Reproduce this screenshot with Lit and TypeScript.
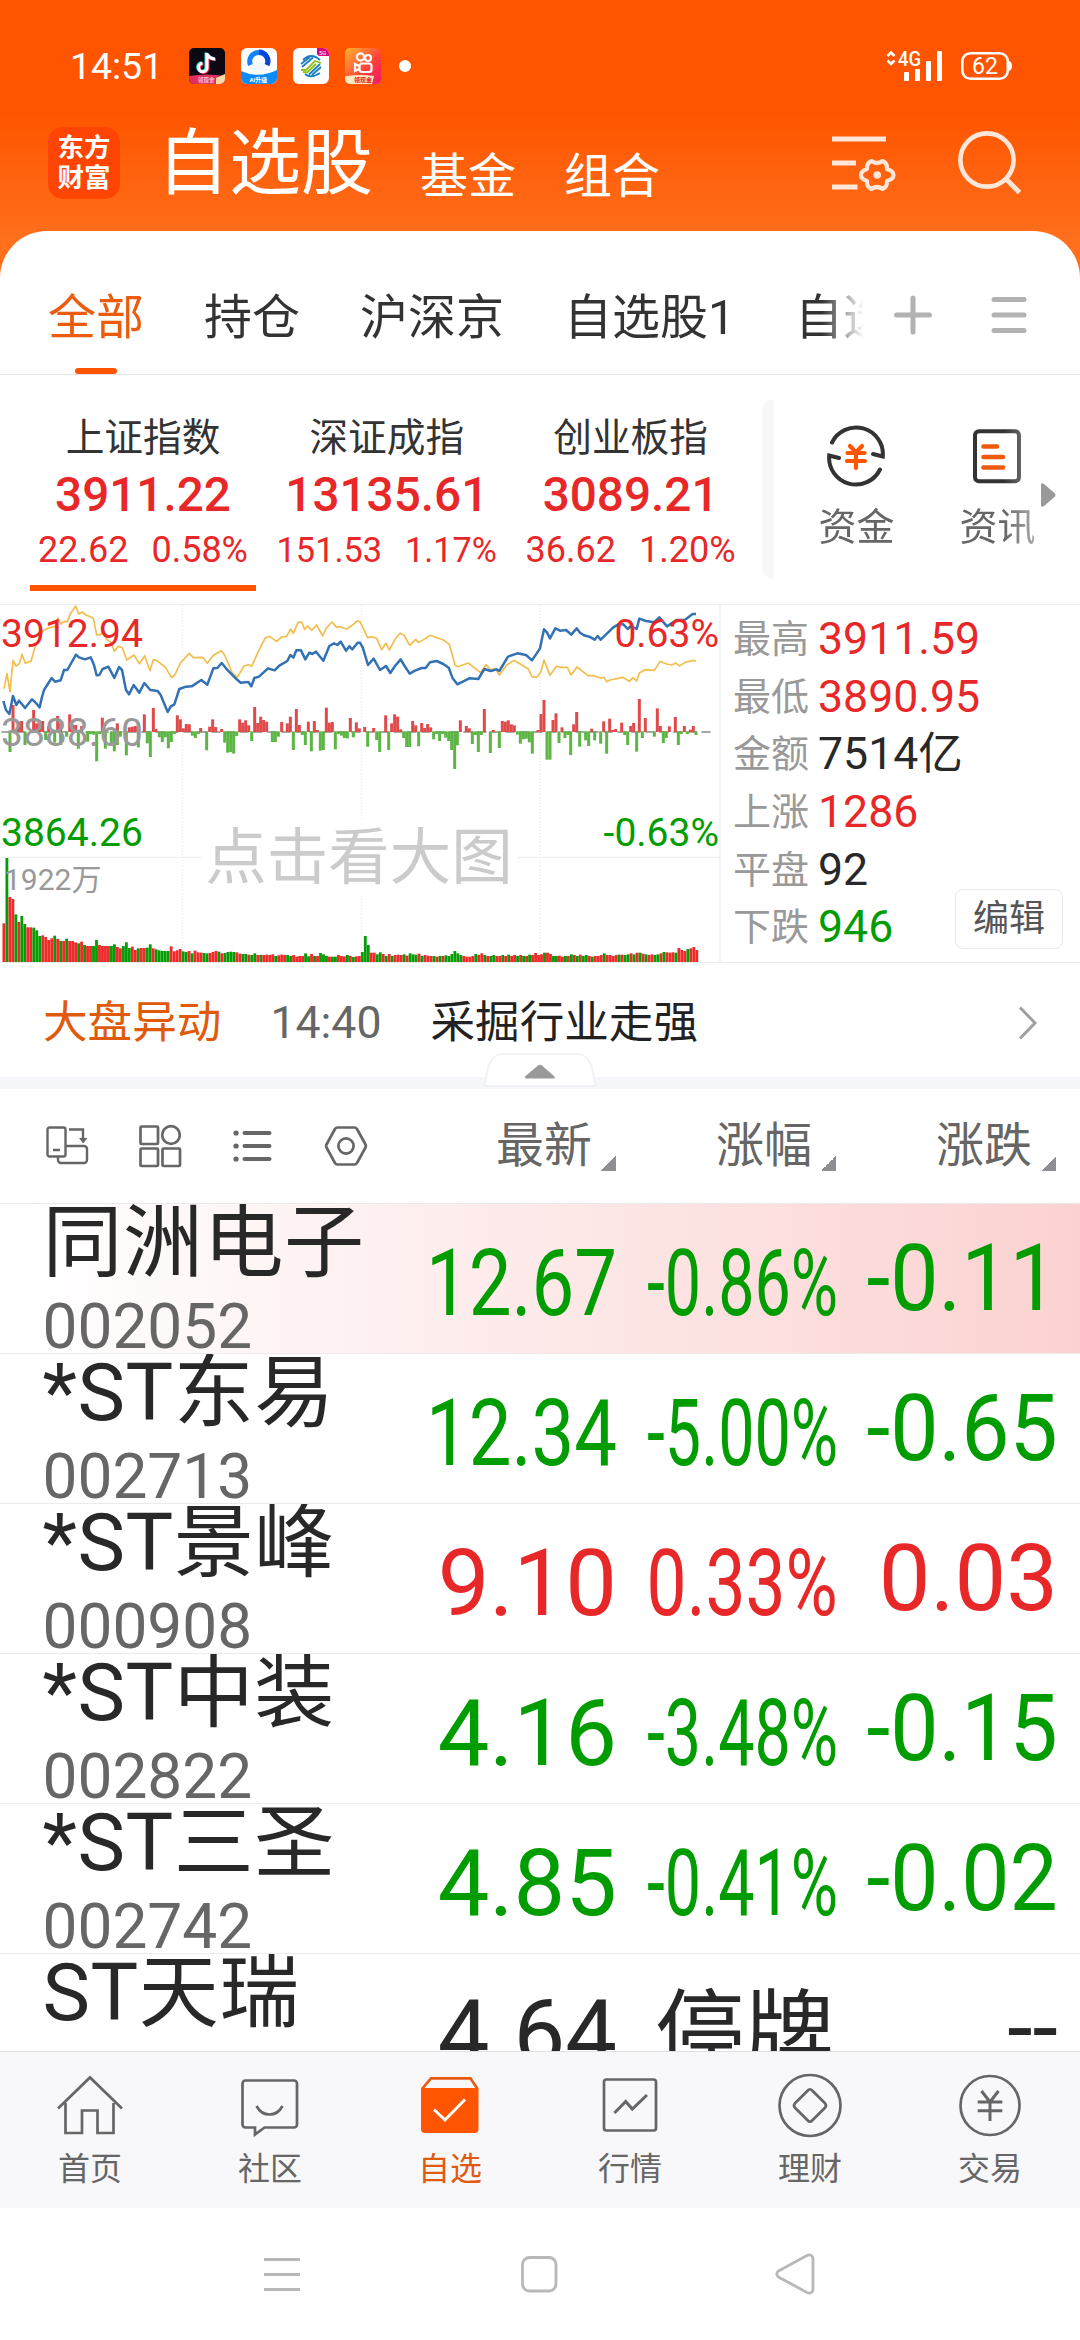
import { LitElement, html, svg, css } from "lit";
import { customElement } from "lit/decorators.js";
import { classMap } from "lit/directives/class-map.js";
import { styleMap } from "lit/directives/style-map.js";

type Tone = "up" | "down" | "flat";

const INDEXES = [
  { name: "上证指数", value: "3911.22", diff: "22.62", pct: "0.58%" },
  { name: "深证成指", value: "13135.61", diff: "151.53", pct: "1.17%" },
  { name: "创业板指", value: "3089.21", diff: "36.62", pct: "1.20%" },
];

const STATS: { label: string; value: string; tone: Tone }[] = [
  { label: "最高", value: "3911.59", tone: "up" },
  { label: "最低", value: "3890.95", tone: "up" },
  { label: "金额", value: "7514亿", tone: "flat" },
  { label: "上涨", value: "1286", tone: "up" },
  { label: "平盘", value: "92", tone: "flat" },
  { label: "下跌", value: "946", tone: "down" },
];

const STOCKS: { name: string; code: string; last: string; pct: string; diff: string; tone: Tone; flash?: boolean }[] = [
  { name: "同洲电子", code: "002052", last: "12.67", pct: "-0.86%", diff: "-0.11", tone: "down", flash: true },
  { name: "*ST东易", code: "002713", last: "12.34", pct: "-5.00%", diff: "-0.65", tone: "down" },
  { name: "*ST景峰", code: "000908", last: "9.10", pct: "0.33%", diff: "0.03", tone: "up" },
  { name: "*ST中装", code: "002822", last: "4.16", pct: "-3.48%", diff: "-0.15", tone: "down" },
  { name: "*ST三圣", code: "002742", last: "4.85", pct: "-0.41%", diff: "-0.02", tone: "down" },
  { name: "ST天瑞", code: "", last: "4.64", pct: "停牌", diff: "--", tone: "flat" },
];

/* Series are kept in thirds of a pixel; the chart's viewBox scales them. */
const STEP = 8.96;
const PRICE =
  "10,333 18,360 28,372 39,318 49,345 57,332 66,343 75,354 96,328 105,336 119,352 125,325 132,300 155,264 165,275 182,271 192,240 202,240 228,194 237,202 255,208 272,202 282,225 290,256 298,255 308,237 325,230 343,264 357,231 366,240 378,300 387,313 401,285 418,308 433,279 451,300 473,303 482,315 503,366 512,350 523,343 538,297 558,290 575,289 604,270 622,284 640,235 652,234 665,219 678,235 690,248 710,268 722,278 745,276 754,289 763,264 777,260 804,235 824,241 838,227 862,213 871,195 880,203 889,181 903,181 916,208 928,188 937,192 948,185 970,212 988,168 1002,160 1012,165 1022,155 1038,182 1048,169 1057,178 1073,158 1080,158 1088,172 1104,225 1121,206 1140,240 1158,228 1171,249 1185,228 1202,208 1212,225 1229,251 1245,242 1265,234 1277,234 1290,217 1310,213 1330,222 1346,233 1358,265 1372,283 1408,265 1435,267 1453,237 1472,243 1490,238 1498,243 1524,200 1552,190 1578,195 1596,211 1620,175 1632,118 1641,127 1650,145 1666,115 1680,122 1698,120 1714,134 1730,115 1740,128 1752,136 1768,140 1784,149 1793,138 1802,149 1840,112 1855,103 1870,103 1883,117 1893,108 1910,117 1918,86 1938,93 1962,97 1978,82 2001,109 2030,90 2055,89 2078,72 2088,72";
const AVERAGE =
  "12,296 21,251 30,306 39,211 48,228 58,221 66,193 76,220 93,214 104,175 128,123 150,112 165,110 174,84 182,102 192,94 202,95 211,71 227,48 236,72 247,66 258,75 280,85 290,135 300,135 308,124 320,148 333,157 343,184 355,169 367,173 380,210 402,195 418,221 434,197 450,242 460,209 470,211 496,232 515,263 525,254 541,219 568,190 580,203 608,202 622,220 640,196 664,182 674,195 696,247 712,262 732,228 747,224 755,229 775,184 795,145 808,139 830,154 845,141 860,139 872,117 880,130 894,97 905,96 914,118 923,108 935,121 950,105 968,138 978,115 996,96 1010,112 1020,110 1040,117 1060,103 1072,93 1080,95 1103,143 1115,140 1130,145 1145,179 1158,160 1168,180 1185,148 1200,130 1212,135 1229,166 1247,148 1256,158 1290,136 1330,150 1348,163 1365,225 1373,230 1405,219 1425,235 1442,248 1458,224 1472,240 1485,235 1498,255 1520,225 1542,211 1585,237 1596,260 1610,262 1623,245 1632,210 1650,256 1670,228 1680,232 1702,232 1713,255 1731,231 1764,257 1780,257 1802,264 1812,262 1820,275 1830,270 1868,262 1888,274 1899,263 1910,273 1918,249 1935,239 1963,241 1980,214 2000,222 2015,225 2028,219 2038,228 2055,217 2080,211 2088,213";
const FLOW_UP =
  "39,345 56,395 65,393 101,360 110,400 119,392 128,393 146,408 173,378 182,400 209,373 218,405 227,405 245,408 307,383 352,400 388,412 397,410 406,408 415,400 433,373 460,354 468,417 532,376 541,388 550,415 559,402 568,403 602,414 629,410 638,388 647,411 665,417 719,388 728,398 737,391 746,406 764,351 773,399 782,380 791,390 800,395 845,396 862,400 871,380 889,357 898,405 925,395 943,393 952,420 979,353 988,398 997,396 1051,384 1069,397 1078,415 1094,411 1121,414 1157,376 1175,400 1184,373 1193,380 1202,418 1238,393 1247,406 1265,399 1274,414 1283,402 1292,412 1381,391 1399,408 1408,415 1453,357 1480,420 1507,393 1516,395 1525,391 1534,403 1543,406 1614,420 1623,372 1632,330 1659,390 1668,370 1686,412 1721,403 1730,366 1775,416 1811,394 1829,386 1838,420 1847,417 1865,398 1892,408 1901,399 1918,327 1936,384 1972,355 1981,408 2008,409 2026,381 2053,408 2071,419 2080,408";
const FLOW_DOWN =
  "30,486 75,465 137,450 164,458 182,465 200,440 235,476 263,455 272,432 281,434 290,514 299,432 316,476 334,466 343,484 352,465 361,440 379,496 415,472 442,460 451,501 478,442 487,456 496,442 505,475 514,456 523,432 577,437 586,444 595,432 620,481 674,458 683,488 692,486 701,491 710,438 755,453 817,456 826,456 835,440 880,480 907,435 916,465 934,484 961,482 970,480 1006,478 1015,432 1024,437 1033,444 1042,445 1060,442 1103,470 1130,450 1139,486 1166,480 1211,444 1220,471 1229,471 1256,469 1301,448 1310,432 1319,453 1328,432 1337,443 1346,453 1355,480 1364,537 1372,466 1417,462 1426,435 1435,486 1444,435 1471,489 1498,474 1552,434 1561,461 1570,448 1579,446 1588,457 1597,491 1641,509 1650,509 1677,459 1695,444 1704,435 1712,495 1739,470 1757,451 1766,468 1784,451 1802,461 1820,491 1874,435 1883,465 1910,485 1927,444 1963,440 1990,459 1999,444 2035,465 2044,432 2062,432 2088,435";
const VOLUME = [
  1000, 804, 921, 927, 973, 996, 978, 1002, 1012, 1012, 1013, 1021, 1038, 1036, 1041, 1050, 1045, 1037, 1047, 1053,
  1053, 1046, 1053, 1053, 1057, 1060, 1055, 1065, 1068, 1068, 1068, 1050, 1065, 1068, 1068, 1068, 1068, 1063, 1071,
  1075, 1068, 1057, 1074, 1070, 1080, 1075, 1074, 1074, 1073, 1063, 1075, 1078, 1081, 1083, 1083, 1083, 1069, 1084,
  1081, 1077, 1084, 1086, 1083, 1090, 1082, 1087, 1088, 1089, 1090, 1089, 1086, 1083, 1085, 1090, 1089, 1086, 1085,
  1086, 1087, 1091, 1092, 1092, 1094, 1095, 1090, 1095, 1095, 1095, 1094, 1095, 1093, 1098, 1096, 1094, 1095, 1095,
  1098, 1095, 1100, 1098, 1098, 1090, 1099, 1092, 1098, 1098, 1089, 1093, 1098, 1100, 1100, 1100, 1095, 1098, 1099,
  1095, 1098, 1101, 1099, 1098, 1086, 1038, 1065, 1088, 1088, 1093, 1087, 1092, 1098, 1092, 1098, 1095, 1094, 1095,
  1093, 1097, 1090, 1093, 1094, 1091, 1098, 1095, 1097, 1098, 1098, 1100, 1098, 1098, 1096, 1098, 1092, 1083, 1090,
  1095, 1098, 1100, 1100, 1098, 1092, 1095, 1090, 1095, 1098, 1098, 1095, 1098, 1098, 1095, 1098, 1094, 1098, 1095,
  1098, 1095, 1098, 1098, 1094, 1095, 1089, 1095, 1093, 1088, 1088, 1092, 1098, 1098, 1097, 1100, 1098, 1098, 1093,
  1095, 1098, 1094, 1098, 1095, 1098, 1100, 1098, 1098, 1095, 1090, 1095, 1095, 1098, 1095, 1094, 1094, 1095, 1093,
  1090, 1093, 1088, 1088, 1091, 1093, 1095, 1093, 1095, 1093, 1090, 1086, 1087, 1088, 1087, 1088, 1074, 1080, 1083,
  1077, 1075, 1071, 1080,
];
const VOLUME_TONES =
  "rgrrgrggrrgggrrrrgrgrgrrrgrgrrggrrrrggrrgggrrgrrggrgggggrrrrg" +
  "grgrrrggrrrgrggggrrggrggrgrrrrgrrrggrrrrggrgrgggrggrrrgrgrr" +
  "gggrrggrgrgrrrgrgggrgrrrgrgrggggg" +
  "grrrrgrrgrggrrgrgrrgrgrgrrrrgrrggrrgrgrgrggrgrrrgrrrrgrggrgrgrgrrggrgrrrgrrrgrrrg";

const pairs = (s: string) => s.split(" ").map((p) => p.split(",").map(Number));

/* Advance widths in em, used to squeeze quotes that exceed their column. */
const ADVANCE: Record<string, number> = { ".": 0.2634, "-": 0.2759, "%": 0.7319 };
const QUOTE_SIZE = 92;
const QUOTE_MAX = 191;
const squeeze = (text: string) => {
  if (/[^\d.%-]/.test(text)) return 1;
  const width = [...text].reduce((sum, ch) => sum + (ADVANCE[ch] ?? 0.5615), 0) * QUOTE_SIZE;
  return Math.min(1, QUOTE_MAX / width);
};

const base = css`
  :host {
    display: block;
    box-sizing: border-box;
  }
  * {
    box-sizing: border-box;
  }
  svg {
    display: block;
    flex: none;
  }
  .up {
    color: #e82828;
  }
  .down {
    color: #009c00;
  }
  .flat {
    color: #282828;
  }
`;

@customElement("status-bar")
export class StatusBar extends LitElement {
  static styles = [
    base,
    css`
      .bar {
        display: flex;
        align-items: center;
        height: 110px;
        padding: 22px 68px 0 70px;
        color: #fff;
      }
      .time {
        width: 119px;
        font-size: 37.500px;
        line-height: 44px;
        letter-spacing: -0.1px;
      }
      .apps {
        display: flex;
        gap: 16px;
      }
      .dot {
        width: 12px;
        height: 12px;
        margin-left: 18px;
        border-radius: 50%;
        background: #fff;
      }
      .signal {
        margin-left: auto;
        margin-right: 18px;
      }
    `,
  ];
  render() {
    return html`
      <div class="bar">
        <span class="time">14:51</span>
        <div class="apps">
          <svg width="36" height="36" viewBox="0 0 36 36">
            <rect width="36" height="36" rx="5" fill="#0b0a14" />
            <path d="M0 28 Q18 25 36 28 V31 a5 5 0 0 1 -5 5 H5 a5 5 0 0 1 -5 -5z" fill="#e0305f" />
            <path d="M27 30 L36 26 V31 a5 5 0 0 1 -5 5 H27z" fill="#ffd9a8" />
            <path d="M18 5 v14.500 a4.200 4.200 0 1 1 -4.500 -4.200 M18 5.500 q1.500 5 8 5.500" fill="none" stroke="#25e8e2" stroke-width="3" transform="translate(-1 -.5)" />
            <path d="M18 5 v14.500 a4.200 4.200 0 1 1 -4.500 -4.200 M18 5.500 q1.500 5 8 5.500" fill="none" stroke="#fe2c55" stroke-width="3" transform="translate(1 .8)" />
            <path d="M18 5 v14.500 a4.200 4.200 0 1 1 -4.500 -4.200 M18 5.500 q1.500 5 8 5.500" fill="none" stroke="#fff" stroke-width="3" />
            <text x="9" y="34" font-size="5.500" fill="#fff">领现金</text>
          </svg>
          <svg width="36" height="36" viewBox="0 0 36 36">
            <rect width="36" height="36" rx="6" fill="#fff" />
            <path d="M0 23 Q18 31 36 22 V30 a6 6 0 0 1 -6 6 H6 a6 6 0 0 1 -6 -6z" fill="#0d8cf8" />
            <path d="M9.500 17 A9 9 0 1 1 26 17" fill="none" stroke="#1583f5" stroke-width="5" />
            <path d="M18 4 A9 9 0 0 1 26 17" fill="none" stroke="#0a45d8" stroke-width="5" />
            <path d="M11 22 a4 4 0 0 1 3 -6 a5.500 5.500 0 0 1 9 1 a4 4 0 0 1 2 6z" fill="#f4f9ff" />
            <text x="8.500" y="34" font-size="6" font-weight="700" fill="#fff">AI升级</text>
          </svg>
          <svg width="36" height="36" viewBox="0 0 36 36">
            <rect width="36" height="36" rx="6" fill="#fff" />
            <path d="M24 0 H30 a6 6 0 0 1 6 6 V8 H27 a3 3 0 0 1 -3 -3z" fill="#d6057f" />
            <text x="26" y="7" font-size="6" fill="#fff">5G</text>
            <g fill="none" stroke-width="1.800">
              <path d="M10 12 Q18 4 27 12 M8 16 L17 9 M12 26 Q18 31 27 25 M28 19 L19 27 M9 19 L20 9.500 M27 16 L16 26.500" stroke="#1b7ec0" />
              <path d="M8 22 L13 22 L22 13 L28 15 M10 24 L14 24.500 L23 16" stroke="#8cc220" />
            </g>
          </svg>
          <svg width="36" height="36" viewBox="0 0 36 36">
            <defs>
              <linearGradient id="k" x1="0" y1="0" x2="1" y2="1">
                <stop offset="0" stop-color="#ffb52e" />
                <stop offset=".6" stop-color="#ff3f3a" />
                <stop offset="1" stop-color="#f2186a" />
              </linearGradient>
            </defs>
            <rect width="36" height="36" rx="5" fill="url(#k)" />
            <path d="M0 28.500 Q14 26 29 28 L27 36 H5 a5 5 0 0 1 -5 -5z" fill="#ffe9c4" />
            <g fill="none" stroke="#fff" stroke-width="2.200">
              <circle cx="15.500" cy="9" r="3.600" />
              <circle cx="23" cy="10" r="3" />
              <rect x="14.500" y="15.500" width="12" height="8.500" rx="2.500" />
              <path d="M14 18 L10 16 V23 L14 21" />
            </g>
            <text x="9" y="34.300" font-size="6" font-weight="700" fill="#e01b1b">领现金</text>
          </svg>
        </div>
        <i class="dot"></i>
        <svg class="signal" width="57" height="32" viewBox="0 0 57 32" fill="#fff">
          <path d="M1.500 6 L5 2.500 L8.500 6 M1.500 10.500 L5 14 L8.500 10.500" fill="none" stroke="#fff" stroke-width="2.600" />
          <text x="12" y="16" font-size="20" font-weight="500" textLength="23" lengthAdjust="spacingAndGlyphs">4G</text>
          <rect x="18" y="22" width="5" height="9" rx="1" />
          <rect x="29" y="19" width="5" height="12" rx="1" />
          <rect x="40" y="11" width="5" height="20" rx="1" />
          <rect x="51" y="1" width="5" height="30" rx="1" />
        </svg>
        <svg width="51" height="28" viewBox="0 0 51 28">
          <rect x="1.300" y="1.300" width="45.500" height="25.400" rx="8" fill="none" stroke="#fff" stroke-width="2.600" />
          <path d="M48 9 q3 1 3 5 t-3 5z" fill="#fff" />
          <text x="24" y="22" font-size="23" fill="#fff" text-anchor="middle">62</text>
        </svg>
      </div>
    `;
  }
}

@customElement("title-bar")
export class TitleBar extends LitElement {
  static styles = [
    base,
    css`
      .bar {
        display: flex;
        align-items: center;
        height: 106px;
        padding: 0 58px 0 48px;
        color: #fff;
      }
      .logo {
        display: grid;
        place-content: center;
        width: 72px;
        height: 72px;
        border-radius: 15px;
        background: #ff4503;
        font-size: 26.500px;
        font-weight: 700;
        line-height: 30px;
        text-align: center;
      }
      .title {
        margin-left: 37px;
        font-size: 72px;
        line-height: 80px;
        padding-top: 2px;
      }
      .link {
        margin-left: 47px;
        padding-top: 27px;
        font-size: 48px;
        line-height: 54px;
      }
      .link + .link {
        margin-left: 48px;
      }
      .manage {
        margin-left: auto;
        margin-right: 61px;
      }
    `,
  ];
  render() {
    return html`
      <div class="bar">
        <div class="logo"><span>东方</span><span>财富</span></div>
        <span class="title">自选股</span>
        <span class="link">基金</span>
        <span class="link">组合</span>
        <svg class="manage" width="66" height="60" viewBox="0 0 66 60" fill="none" stroke="#ffe6d8" stroke-width="5">
          <path d="M1 6 H55 M1 30 H25 M1 54 H26.500" />
          <path
            d="M40.500 28 Q46 32 51.500 28 Q56.500 30 56 36 Q62.500 38 62.500 42 Q62.500 46 56 48 Q56.500 54 51.500 56 Q46 52 40.500 56 Q35.500 54 36 48 Q30 46 30 42 Q30 38 36 36 Q35.500 30 40.500 28z"
            stroke-width="4.200"
            stroke-linejoin="round"
          />
          <circle cx="46.200" cy="42" r="3.800" fill="#ffe6d8" stroke="none" />
        </svg>
        <svg width="64" height="64" viewBox="0 0 64 64" fill="none" stroke="#ffe6d8" stroke-width="4.600">
          <circle cx="29" cy="29" r="26.600" />
          <path d="M48 48 L61.500 61.500" stroke-width="5" />
        </svg>
      </div>
    `;
  }
}

@customElement("group-tabs")
export class GroupTabs extends LitElement {
  static styles = [
    base,
    css`
      .bar {
        display: flex;
        align-items: stretch;
        height: 144px;
        border-bottom: 1px solid #e4e4e4;
        color: #333;
      }
      .tabs {
        display: flex;
        gap: 60px;
        width: 866px;
        padding-left: 48px;
        overflow: hidden;
        white-space: nowrap;
        mask-image: linear-gradient(to right, #000 822px, transparent 864px);
      }
      .tab {
        display: flex;
        flex: none;
        flex-direction: column;
        align-items: center;
        justify-content: flex-end;
        gap: 20px;
        font-size: 48px;
        line-height: 60px;
      }
      .tab::after {
        content: "";
        width: 42px;
        height: 6px;
        border-radius: 3px;
      }
      .active {
        color: #ec5c0e;
      }
      .active::after {
        background: #ff5500;
      }
      .tools {
        display: flex;
        align-items: center;
        gap: 56px;
        padding: 24px 0 0 26px;
      }
    `,
  ];
  render() {
    const tabs = ["全部", "持仓", "沪深京", "自选股1", "自选"];
    return html`
      <div class="bar">
        <div class="tabs">
          ${tabs.map((t, i) => html`<span class=${classMap({ tab: true, active: i === 0 })}>${t}</span>`)}
        </div>
        <div class="tools">
          <svg width="42" height="42" viewBox="0 0 42 42" stroke="#b2b2b2" stroke-width="5" stroke-linecap="round">
            <path d="M4.500 21 H37.500 M21 4 V38" />
          </svg>
          <svg width="38" height="42" viewBox="0 0 38 42" stroke="#b2b2b2" stroke-width="5" stroke-linecap="round">
            <path d="M4 5.500 H34 M4 21 H34 M4 36.500 H34" />
          </svg>
        </div>
      </div>
    `;
  }
}

@customElement("index-strip")
export class IndexStrip extends LitElement {
  static styles = [
    base,
    css`
      .strip {
        display: flex;
        height: 229px;
        padding-left: 30px;
      }
      .card {
        display: flex;
        flex-direction: column;
        align-items: center;
        width: 226px;
        height: 216px;
        margin-right: 17.800px;
        padding-top: 36px;
        border-bottom: 6px solid transparent;
        white-space: nowrap;
      }
      .card.on {
        border-image: linear-gradient(#ff5500, #ff5500) 1;
      }
      .name {
        color: #333;
        font-size: 38.700px;
        line-height: 54px;
      }
      .value {
        font-size: 47.700px;
        font-weight: 500;
        line-height: 60px;
      }
      .change {
        display: flex;
        gap: 23px;
        font-size: 36px;
        line-height: 50px;
      }
      .long {
        font-size: 34.300px;
      }
      .edge {
        width: 12px;
        height: 180px;
        margin: 24px 0 0 1px;
        border-radius: 12px 0 0 12px;
        background: #f7f8fa;
      }
      .shortcuts {
        display: flex;
        flex: 1;
        padding: 49px 0 0 42px;
        gap: 61px;
        mask-image: linear-gradient(to right, #000 230px, rgba(0, 0, 0, 0.45) 268px);
      }
      .shortcut {
        display: flex;
        flex-direction: column;
        align-items: center;
        width: 80px;
        color: #666;
        font-size: 38px;
        line-height: 50px;
        gap: 14px;
        white-space: nowrap;
      }
      .strip-body {
        display: flex;
        flex: 1;
        align-items: flex-start;
      }
      .more {
        margin: 108px 24px 0 -15px;
      }
    `,
  ];
  render() {
    return html`
      <div class="strip">
        ${INDEXES.map(
          (x, i) => html`
            <div class=${classMap({ card: true, on: i === 0 })}>
              <span class="name">${x.name}</span>
              <span class="value up">${x.value}</span>
              <span class=${classMap({ change: true, up: true, long: x.diff.length > 5 })}>
                <span>${x.diff}</span><span>${x.pct}</span>
              </span>
            </div>
          `,
        )}
        <div class="edge"></div>
        <div class="strip-body">
          <div class="shortcuts">
            <div class="shortcut">
              <svg width="64" height="64" viewBox="0 0 64 64" fill="none" stroke="#333" stroke-width="4" stroke-linecap="round">
                <path d="M8 18.500 A26.800 26.800 0 0 1 58.800 32.500 L49 30" />
                <path d="M56 45.500 A26.800 26.800 0 0 1 5.200 31.500 L15 34" />
                <g stroke="#ff5500" stroke-width="4.200">
                  <path d="M26 22 L32 28.500 L38 22 M32 28.500 V44 M23.500 29 H40.500 M23 37 H41" />
                </g>
              </svg>
              <span>资金</span>
            </div>
            <div class="shortcut">
              <svg width="64" height="64" viewBox="0 0 64 64" fill="none" stroke="#333" stroke-width="4" stroke-linecap="round">
                <rect x="10" y="7.200" width="44" height="50" rx="4" />
                <path d="M18.500 22.500 H32 M18.500 33 H38 M18.500 43.500 H38" stroke="#ee5a0c" stroke-width="4.600" />
              </svg>
              <span>资讯</span>
            </div>
          </div>
          <svg class="more" width="15" height="24" viewBox="0 0 15 24" fill="#999">
            <path d="M0 2 Q0 -1 3 1 L13.500 10 Q15.500 12 13.500 14 L3 23 Q0 25 0 22z" />
          </svg>
        </div>
      </div>
    `;
  }
}

@customElement("market-chart")
export class MarketChart extends LitElement {
  static styles = [
    base,
    css`
      .panel {
        display: flex;
        height: 359px;
        border-top: 1px solid #ebebeb;
        border-bottom: 1px solid #ebebeb;
      }
      .chart {
        position: relative;
        width: 721px;
        border-right: 2px solid #f4f4f4;
      }
      .axis {
        position: absolute;
        font-size: 39px;
        line-height: 40px;
      }
      .left {
        left: 1px;
      }
      .right {
        right: 0;
      }
      .top {
        top: 9px;
      }
      .mid {
        top: 108px;
        color: #999;
      }
      .low {
        top: 208px;
      }
      .vol {
        top: 255px;
        left: 4px;
        color: #999;
        font-size: 30px;
      }
      .hint {
        position: absolute;
        top: 215px;
        left: 201px;
        width: 316px;
        height: 74px;
        background: #fff;
        color: #cbcbcb;
        font-size: 61.500px;
        line-height: 76px;
        text-align: center;
        white-space: nowrap;
      }
      .stats {
        display: flex;
        flex: 1;
        flex-direction: column;
        padding: 5px 0 0 12px;
      }
      .stat {
        display: flex;
        align-items: center;
        gap: 9px;
        height: 57.700px;
      }
      .label {
        color: #999;
        font-size: 38px;
        line-height: 50px;
      }
      .num {
        font-size: 44.600px;
        line-height: 50px;
      }
      .edit {
        margin: -17px 17px 0 auto;
        width: 108px;
        height: 60px;
        border: 1.500px solid #eaeaea;
        border-radius: 8px;
        color: #555;
        font-size: 36px;
        line-height: 59px;
        text-align: center;
      }
    `,
  ];
  render() {
    return html`
      <div class="panel">
        <div class="chart">
          <svg width="720" height="357" viewBox="0 45 2160 1071">
            <g stroke="#e2e2e2" stroke-width="3" stroke-dasharray="3 6">
              <path d="M547 45 V1116 M1084 45 V1116 M1621 45 V1116" />
            </g>
            <path d="M0 802 H2160" stroke="#ebebeb" stroke-width="3" />
            <path d="M4 426 H2132" stroke="#8c8c8c" stroke-width="5" stroke-dasharray="28 14" />
            ${pairs(FLOW_UP).map(([x, y]) => svg`<rect x=${x - 4.5} y=${y} width="9" height=${426 - y} fill="#e04a4a" />`)}
            ${pairs(FLOW_DOWN).map(([x, y]) => svg`<rect x=${x - 4.5} y="424" width="9" height=${y - 424} fill="#5cb544" />`)}
            ${VOLUME.map(
              (y, i) =>
                svg`<rect x=${7.5 + i * STEP} y=${y} width="8.500" height=${1116 - y} fill=${VOLUME_TONES[i] === "g" ? "#069c06" : "#ee2a2a"} />`,
            )}
            <polyline points=${AVERAGE} fill="none" stroke="#f2bd4c" stroke-width="5" stroke-linejoin="round" />
            <polyline points=${PRICE} fill="none" stroke="#3371b5" stroke-width="7.500" stroke-linejoin="round" />
          </svg>
          <span class="hint">点击看大图</span>
          <span class="axis left top up">3912.94</span>
          <span class="axis right top up">0.63%</span>
          <span class="axis left mid">3888.60</span>
          <span class="axis left low down">3864.26</span>
          <span class="axis right low down">-0.63%</span>
          <span class="axis vol">1922万</span>
        </div>
        <div class="stats">
          ${STATS.map(
            (s, i) => html`
              <div class="stat">
                <span class="label">${s.label}</span>
                <span class="num ${s.tone}">${s.value}</span>
                ${i === STATS.length - 1 ? html`<span class="edit">编辑</span>` : ""}
              </div>
            `,
          )}
        </div>
      </div>
    `;
  }
}

@customElement("news-line")
export class NewsLine extends LitElement {
  static styles = [
    base,
    css`
      .line {
        position: relative;
        display: flex;
        align-items: center;
        height: 126px;
        padding: 6px 42px 0 43px;
        border-bottom: 12px solid #f5f7fa;
        font-size: 44.600px;
        line-height: 60px;
      }
      .tag {
        color: #e05a0c;
      }
      .time {
        margin-left: 49px;
        color: #666;
      }
      .text {
        margin-left: 49px;
        color: #222;
      }
      .go {
        margin-left: auto;
      }
      .handle {
        position: absolute;
        left: 482px;
        bottom: -11px;
      }
    `,
  ];
  render() {
    return html`
      <div class="line">
        <span class="tag">大盘异动</span>
        <span class="time">14:40</span>
        <span class="text">采掘行业走强</span>
        <svg class="go" width="20" height="36" viewBox="0 0 20 36" fill="none" stroke="#a0a0a0" stroke-width="3">
          <path d="M2 2.500 L17 18 L2 33.500" />
        </svg>
        <svg class="handle" width="116" height="36" viewBox="0 0 116 36">
          <path d="M2 34 L6 16 Q10 2 22 2 H94 Q106 2 110 16 L114 34z" fill="#fff" stroke="#f1f2f4" stroke-width="2" />
          <path d="M43 24.500 L56 13.500 Q58 12 60 13.500 L72.500 24.500 Q73.500 26.500 71.500 26.500 H44.500 Q42.500 26.500 43 24.500z" fill="#999" />
        </svg>
      </div>
    `;
  }
}

@customElement("stock-list")
export class StockList extends LitElement {
  static styles = [
    base,
    css`
      .head {
        display: flex;
        align-items: center;
        height: 115px;
        padding-right: 24px;
        border-bottom: 1px solid #e9e9e9;
        color: #666;
      }
      .icons {
        display: flex;
        gap: 49px;
        padding-left: 45px;
      }
      .sort {
        display: flex;
        align-items: flex-end;
        justify-content: flex-end;
        gap: 9px;
        width: 220px;
        font-size: 48px;
        line-height: 60px;
      }
      .icons + .sort {
        margin-left: auto;
      }
      .sort::after {
        content: "";
        width: 15px;
        height: 15px;
        margin-bottom: 5px;
        background: linear-gradient(135deg, transparent 50%, #8e8e93 50%);
      }
      .rows {
        height: 847px;
        overflow: hidden;
      }
      .row {
        display: grid;
        grid-template-columns: 374.500px 200px 221px 220px;
        height: 150px;
        padding-left: 42.500px;
        overflow: hidden;
        border-bottom: 1px solid #ebebeb;
        white-space: nowrap;
      }
      .flash {
        background: linear-gradient(to right, #fff 3%, #fbd2d1);
      }
      .name {
        color: #282828;
        font-size: 80px;
        line-height: 78px;
        letter-spacing: 0.5px;
      }
      .code {
        padding-top: 19px;
        color: #666;
        font-size: 62.200px;
        line-height: 52px;
      }
      .quote {
        display: flex;
        justify-content: flex-end;
        padding-top: 34px;
        font-size: 92px;
        line-height: 92px;
      }
      .quote span {
        flex: none;
        transform-origin: right;
      }
      .diff {
        padding-top: 29px;
      }
      .text {
        padding-right: 4px;
        font-size: 89.500px;
      }
    `,
  ];
  render() {
    return html`
      <div class="head">
        <div class="icons">
          <svg width="44" height="44" viewBox="0 0 44 44" fill="none" stroke="#666" stroke-width="2.400">
            <rect x="2.500" y="3.500" width="18" height="29" rx="2" />
            <path d="M8 26 H15 M24 5.500 H38 V17" />
            <path d="M34 14 H42.500 L38.200 19.500z" fill="#666" stroke="none" />
            <path d="M20.500 22 H39 a3 3 0 0 1 3 3 V36 a3 3 0 0 1 -3 3 H16 a3 3 0 0 1 -3 -3 V32.500" />
          </svg>
          <svg width="44" height="44" viewBox="0 0 44 44" fill="none" stroke="#666" stroke-width="2.700">
            <rect x="2.500" y="2.500" width="17.500" height="17.500" rx="1" />
            <circle cx="33" cy="11" r="8.800" />
            <rect x="2.500" y="24.500" width="17.500" height="17.500" rx="1" />
            <rect x="24.500" y="24.500" width="17.500" height="17.500" rx="1" />
          </svg>
          <svg width="44" height="44" viewBox="0 0 44 44" stroke="#666" stroke-width="4" stroke-linecap="round">
            <path d="M13.500 9 H38.500 M13.500 22 H38.500 M13.500 35 H38.500" />
            <path d="M5 9 h.1 M5 22 h.1 M5 35 h.1" stroke-width="5.200" />
          </svg>
          <svg width="44" height="44" viewBox="0 0 44 44" fill="none" stroke="#666" stroke-width="2.700" stroke-linejoin="round">
            <path d="M13.500 3.500 H30.500 Q32 3.500 33 5 L41.500 20.500 Q42.300 22 41.500 23.500 L33 39 Q32 40.500 30.500 40.500 H13.500 Q12 40.500 11 39 L2.500 23.500 Q1.700 22 2.500 20.500 L11 5 Q12 3.500 13.500 3.500z" />
            <circle cx="22" cy="22" r="7.600" />
          </svg>
        </div>
        <span class="sort">最新</span>
        <span class="sort">涨幅</span>
        <span class="sort">涨跌</span>
      </div>
      <div class="rows">
        ${STOCKS.map(
          (s) => html`
            <div class=${classMap({ row: true, flash: !!s.flash })}>
              <div>
                <div class="name">${s.name}</div>
                <div class="code">${s.code}</div>
              </div>
              ${this.quote(s.last, s.tone)} ${this.quote(s.pct, s.tone)} ${this.quote(s.diff, s.tone, true)}
            </div>
          `,
        )}
      </div>
    `;
  }
  private quote(text: string, tone: Tone, diff = false) {
    const classes = { quote: true, [tone]: true, diff, text: text === "停牌" };
    return html`<div class=${classMap(classes)}>
      <span style=${styleMap({ transform: `scaleX(${squeeze(text)})` })}>${text}</span>
    </div>`;
  }
}

@customElement("bottom-nav")
export class BottomNav extends LitElement {
  static styles = [
    base,
    css`
      .nav {
        display: grid;
        grid-template-columns: repeat(6, 1fr);
        height: 157px;
        border-top: 1px solid #e0e0e2;
        background: #f8f8fa;
      }
      .item {
        display: flex;
        flex-direction: column;
        align-items: center;
        padding-top: 13px;
        color: #666;
        font-size: 32px;
        line-height: 49px;
      }
      .on {
        color: #e05a10;
      }
      .system {
        display: flex;
        justify-content: space-between;
        padding: 42px 260px 0 258px;
        height: 132px;
        background: #fff;
      }
    `,
  ];
  render() {
    const items = [
      {
        label: "首页",
        icon: svg`<path d="M8 43.500 L40 12.500 L72 43.500 M15.500 38 V68 H32 V45.500 H47.500 V68 H63.500 V38" />`,
      },
      {
        label: "社区",
        icon: svg`<path d="M15.500 15.500 H64 a3 3 0 0 1 3 3 V59.500 a3 3 0 0 1 -3 3 H34.500 L25 69.500 V62.500 H15.500 a3 3 0 0 1 -3 -3 V18.500 a3 3 0 0 1 3 -3z" /><path d="M26.500 41 Q31 49.500 39.500 49.500 T52.500 41" />`,
      },
      {
        label: "自选",
        icon: svg`<path d="M12 24 L21 13.300 H60.500 L67.500 24" stroke="#e85a12" /><path d="M11 23 H68.500 V64 a4 4 0 0 1 -4 4 H15 a4 4 0 0 1 -4 -4z" fill="#ff5500" stroke="none" /><path d="M24 44.500 L35 55 L55 34.500" stroke="#fff" stroke-width="3" />`,
      },
      {
        label: "行情",
        icon: svg`<rect x="14" y="14.500" width="52" height="51" rx="2.500" /><path d="M24.400 48 L35.700 36.500 L42.300 44 L57 30" stroke-width="3" />`,
      },
      {
        label: "理财",
        icon: svg`<circle cx="40" cy="40.500" r="30.500" /><path d="M37.800 25.500 Q40 23 42.200 25.500 L55 38.300 Q57 40.500 55 42.700 L42.200 55.500 Q40 58 37.800 55.500 L25 42.700 Q23 40.500 25 38.300z" />`,
      },
      {
        label: "交易",
        icon: svg`<circle cx="40" cy="40.500" r="29.500" /><path d="M31.500 26 L40 37 L48.500 26 M40 37 V56 M27.700 37 H52.300 M27.700 45.700 H52.300" stroke-width="3" />`,
      },
    ];
    return html`
      <div class="nav">
        ${items.map(
          (it, i) => html`
            <div class=${classMap({ item: true, on: i === 2 })}>
              <svg width="80" height="80" viewBox="0 0 80 80" fill="none" stroke="#666" stroke-width="2.700">${it.icon}</svg>
              <span>${it.label}</span>
            </div>
          `,
        )}
      </div>
      <div class="system">
        <svg width="48" height="48" viewBox="0 0 48 48" stroke="#b8b8b8" stroke-width="3">
          <path d="M6 9.500 H42 M6 24.500 H42 M6 39.500 H42" />
        </svg>
        <svg width="48" height="48" viewBox="0 0 48 48" fill="none" stroke="#b8b8b8" stroke-width="2.800">
          <rect x="7.500" y="7.500" width="33.500" height="33.500" rx="7" />
        </svg>
        <svg width="48" height="48" viewBox="0 0 48 48" fill="none" stroke="#b8b8b8" stroke-width="2.800">
          <path d="M6.500 21 L35 5.500 Q40.500 3.500 41 9 V39 Q40.500 44.500 35 42.500 L6.500 27 Q3 24 6.500 21z" />
        </svg>
      </div>
    `;
  }
}

@customElement("app-root")
export class AppRoot extends LitElement {
  static styles = [
    base,
    css`
      :host {
        width: 1080px;
        height: 2340px;
        overflow: hidden;
        background: linear-gradient(#ff5500 112px, #ff6f1c 240px);
        font-family: Roboto, "Noto Sans CJK SC", sans-serif;
      }
      .sheet {
        margin-top: 15px;
        border-radius: 47px 47px 0 0;
        background: #fff;
      }
    `,
  ];
  render() {
    return html`
      <status-bar></status-bar>
      <title-bar></title-bar>
      <main class="sheet">
        <group-tabs></group-tabs>
        <index-strip></index-strip>
        <market-chart></market-chart>
        <news-line></news-line>
        <stock-list></stock-list>
        <bottom-nav></bottom-nav>
      </main>
    `;
  }
}
